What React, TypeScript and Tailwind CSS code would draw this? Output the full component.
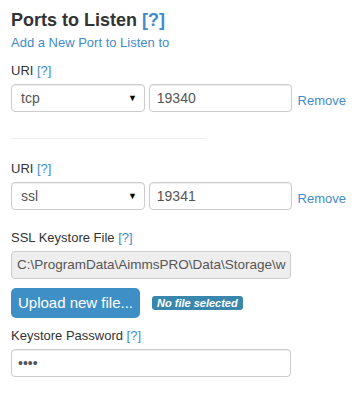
import React from "react";

const link = "text-[#428bca]";

function Help() {
  return <span className={link}>[?]</span>;
}

function UriRow({ proto, port }: { proto: string; port: string }) {
  return (
    <div className="flex items-end">
      <div className="relative h-[28px] w-[135px] rounded-[4px] border border-[#ccc] bg-white shadow-[inset_0_1px_1px_rgba(0,0,0,0.075)]">
        <span className="absolute left-[9px] top-[5px] text-[14px] leading-[17px] text-[#555]">{proto}</span>
        <span className="absolute right-[7px] top-[8px] text-[9px] leading-[10px] text-black">▼</span>
      </div>
      <div className="ml-[4px] flex h-[28px] w-[144px] items-center rounded-[4px] border border-[#ccc] bg-white pl-[7px] text-[14px] text-[#555] shadow-[inset_0_1px_1px_rgba(0,0,0,0.075)]">
        {port}
      </div>
      <span className={`ml-[6px] mb-[4px] text-[13px] leading-[15px] ${link}`}>Remove</span>
    </div>
  );
}

export default function App() {
  return (
    <div
      className="h-[394px] w-[357px] bg-white px-[11px] pt-[9px] text-[#333]"
      style={{ fontFamily: '"Liberation Sans", Arial, sans-serif' }}
    >
      <div className="text-[18px] font-bold leading-[22px]">
        Ports to Listen <span className="text-[#428bca]">[?]</span>
      </div>
      <div className={`mt-[4px] text-[13px] leading-[15px] ${link}`}>Add a New Port to Listen to</div>

      <div className="mt-[13px] text-[13px] leading-[15px]">
        URI <Help />
      </div>
      <div className="mt-[6px]">
        <UriRow proto="tcp" port="19340" />
      </div>

      <div className="mt-[26px] h-px w-[195px] bg-[#eee]" />

      <div className="mt-[22px] text-[13px] leading-[15px]">
        URI <Help />
      </div>
      <div className="mt-[6px]">
        <UriRow proto="ssl" port="19341" />
      </div>

      <div className="mt-[20px] text-[13px] leading-[15px]">
        SSL Keystore File <Help />
      </div>
      <div className="mt-[6px] h-[28px] w-[280px] rounded-[4px] border border-[#ccc] bg-[#eee] pl-[5px] pr-[4px] text-[13.5px] leading-[26px] text-[#555]">
        <div className="overflow-hidden whitespace-nowrap">C:\ProgramData\AimmsPRO\Data\Storage\webserver</div>
      </div>

      <div className="mt-[9px] flex items-center">
        <div className="flex h-[30px] w-[129px] items-center justify-center rounded-[5px] bg-[#3f8fc7] text-[15px] text-white">
          Upload new file...
        </div>
        <span className="ml-[12px] rounded-[3px] bg-[#3a87ad] px-[5px] text-[11px] font-bold italic leading-[14px] text-white">
          No file selected
        </span>
      </div>

      <div className="mt-[10px] text-[13px] leading-[15px]">
        Keystore Password <Help />
      </div>
      <div className="mt-[6px] flex h-[28px] w-[280px] items-center rounded-[4px] border border-[#ccc] bg-white pl-[6px] text-[14px] text-[#555] shadow-[inset_0_1px_1px_rgba(0,0,0,0.075)]">
        ••••
      </div>
    </div>
  );
}
